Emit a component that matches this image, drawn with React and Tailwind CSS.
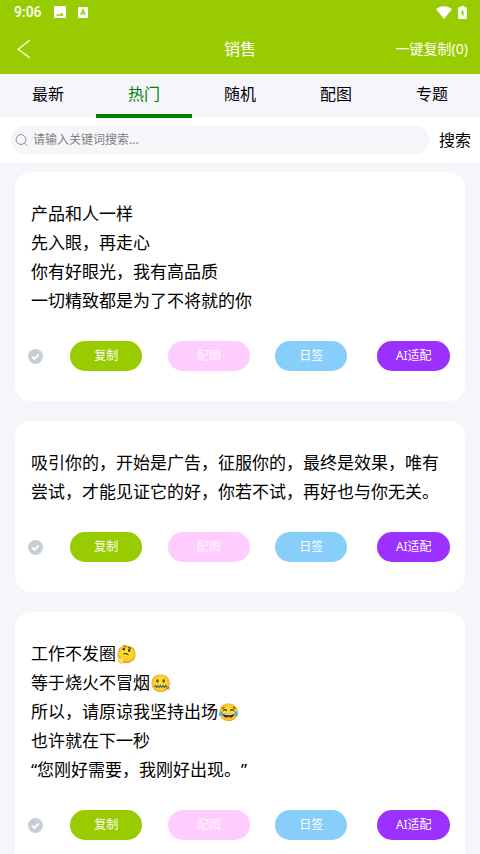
import React, { useState } from 'react'

const TABS = ['最新', '热门', '随机', '配图', '专题']

const POSTS = [
  {
    id: 1,
    lines: [
      '产品和人一样',
      '先入眼，再走心',
      '你有好眼光，我有高品质',
      '一切精致都是为了不将就的你',
    ],
  },
  {
    id: 2,
    lines: [
      '吸引你的，开始是广告，征服你的，最终是效果，唯有尝试，才能见证它的好，你若不试，再好也与你无关。',
    ],
  },
  {
    id: 3,
    lines: [
      '工作不发圈🤔',
      '等于烧火不冒烟🤐',
      '所以，请原谅我坚持出场😂',
      '也许就在下一秒',
      '“您刚好需要，我刚好出现。”',
    ],
  },
]

const ACTIONS = [
  { label: '复制', className: 'w-[72px] bg-[#99cc00] text-white' },
  { label: '配图', className: 'w-[82px] bg-[#ffccff] text-white/80' },
  { label: '日签', className: 'w-[72px] bg-[#87cefa] text-white' },
  { label: 'AI适配', className: 'w-[73px] bg-[#9b30ff] text-white' },
]

const StatusBar = () => (
  <div className="flex h-6 items-center pl-[14px] pr-[13px]">
    <span className="mr-3 font-[Roboto,sans-serif] text-sm font-medium leading-6">
      9:06
    </span>
    <svg className="mr-3 size-3" viewBox="0 0 12 12" aria-hidden>
      <rect width="12" height="12" rx="1.3" fill="#fff" />
      <path d="M2 9.8 3.9 7.4l1.4 1.500 2.200-2.500L10 9.8z" fill="#99cc00" />
    </svg>
    <svg className="h-[11px] w-[10px]" viewBox="0 0 10 11" aria-hidden>
      <rect width="10" height="11" rx="1.2" fill="#fff" />
      <path
        d="M2.7 8 5 2.8 7.3 8M3.5 6.3h3"
        fill="none"
        stroke="#99cc00"
        strokeWidth="1.3"
      />
    </svg>
    <svg className="ml-auto mr-[6px] h-[13px] w-4" viewBox="0 0 16 13" aria-hidden>
      <path d="M8 13 0 3.1C2.2 1.2 4.9.2 8 .2s5.8 1 8 2.9z" fill="#fff" />
    </svg>
    <svg className="h-[13px] w-[9px]" viewBox="0 0 9 13" aria-hidden>
      <path
        d="M2.6 1.2V0h3.8v1.2H8q.8 0 .8.8v10.2q0 .8-.8.8H1q-.8 0-.8-.8V2q0-.8.8-.8z"
        fill="#fff"
      />
      <path d="M5.3 3 2.6 7.3h1.6v3.500l2.500-4.400H5.1z" fill="#99cc00" />
    </svg>
  </div>
)

const Header = () => (
  <header className="shrink-0 bg-[#99cc00] text-white">
    <StatusBar />
    <div className="grid h-[50px] grid-cols-[1fr_auto_1fr] items-center px-3">
      <button type="button" aria-label="返回" className="w-6 px-[5px]">
        <svg
          className="h-5 w-[14px]"
          viewBox="0 0 14 20"
          fill="none"
          stroke="#fff"
          strokeWidth="1.3"
        >
          <path d="M12.7 1.2 1.2 10.2l11.5 8.6" />
        </svg>
      </button>
      <h1 className="text-base">销售</h1>
      <button type="button" className="justify-self-end text-sm">
        一键复制(0)
      </button>
    </div>
  </header>
)

const Tabs = ({ active, onChange }) => (
  <nav className="grid h-11 shrink-0 grid-cols-5">
    {TABS.map(tab => (
      <button
        key={tab}
        type="button"
        onClick={() => onChange(tab)}
        className={
          tab === active
            ? 'border-b-4 border-[#008000] text-base text-[#008000]'
            : 'border-b-4 border-transparent text-base'
        }
      >
        {tab}
      </button>
    ))}
  </nav>
)

const Search = () => {
  const [keyword, setKeyword] = useState('')

  return (
    <form
      className="flex h-11 shrink-0 items-center bg-white pl-[11px] pr-[9px]"
      onSubmit={e => e.preventDefault()}
    >
      <label className="mr-[10px] flex h-7 min-w-0 flex-1 items-center rounded-full bg-[#f5f6fa] pl-1">
        <svg
          className="mr-[5px] size-[13px] shrink-0"
          viewBox="0 0 13 13"
          fill="none"
          stroke="#8c8c8c"
          aria-hidden
        >
          <circle cx="6" cy="5.5" r="4.9" />
          <path d="m9.5 9 2.7 2.7" />
        </svg>
        <input
          type="text"
          aria-label="搜索关键词"
          value={keyword}
          placeholder="请输入关键词搜索..."
          onChange={e => setKeyword(e.target.value)}
          className="min-w-0 flex-1 bg-transparent text-xs outline-none placeholder:text-[#808080]"
        />
      </label>
      <button type="submit" className="text-base">
        搜索
      </button>
    </form>
  )
}

const Post = ({ post, checked, onToggle }) => (
  <article className="rounded-2xl bg-white pb-[30px] pt-[27px]">
    <div className="px-4 text-[17px] leading-[29px] [text-spacing-trim:space-all]">
      {post.lines.map(line => (
        <p key={line}>{line}</p>
      ))}
    </div>
    <div className="mt-[26px] grid grid-cols-[40px_repeat(4,1fr)] items-center justify-items-center">
      <label className="cursor-pointer">
        <input
          type="checkbox"
          aria-label="选择"
          className="peer sr-only"
          checked={checked}
          onChange={onToggle}
        />
        <svg
          className="size-[15px] text-[#c8ced7] peer-checked:text-[#99cc00]"
          viewBox="0 0 15 15"
          aria-hidden
        >
          <circle cx="7.5" cy="7.5" r="7.5" fill="currentColor" />
          <path
            d="m4.2 7.7 2.3 2.2 4.3-4.6"
            fill="none"
            stroke="#fff"
            strokeWidth="1.9"
          />
        </svg>
      </label>
      {ACTIONS.map(({ label, className }) => (
        <button
          key={label}
          type="button"
          className={`h-[30px] rounded-full text-xs ${className}`}
        >
          {label}
        </button>
      ))}
    </div>
  </article>
)

const App = () => {
  const [tab, setTab] = useState('热门')
  const [selected, setSelected] = useState([])

  const toggle = id => () =>
    setSelected(
      selected.includes(id) ? selected.filter(s => s !== id) : [...selected, id]
    )

  return (
    <div className="flex h-screen flex-col bg-[#f5f6fa] font-['Noto_Sans','Noto_Sans_CJK_SC',sans-serif] text-black">
      <Header />
      <Tabs active={tab} onChange={setTab} />
      <Search />
      <main className="flex min-h-0 flex-1 flex-col gap-5 overflow-y-auto px-[15px] py-[10px] [scrollbar-width:none]">
        {POSTS.map(post => (
          <Post
            key={post.id}
            post={post}
            checked={selected.includes(post.id)}
            onToggle={toggle(post.id)}
          />
        ))}
      </main>
    </div>
  )
}

export default App
